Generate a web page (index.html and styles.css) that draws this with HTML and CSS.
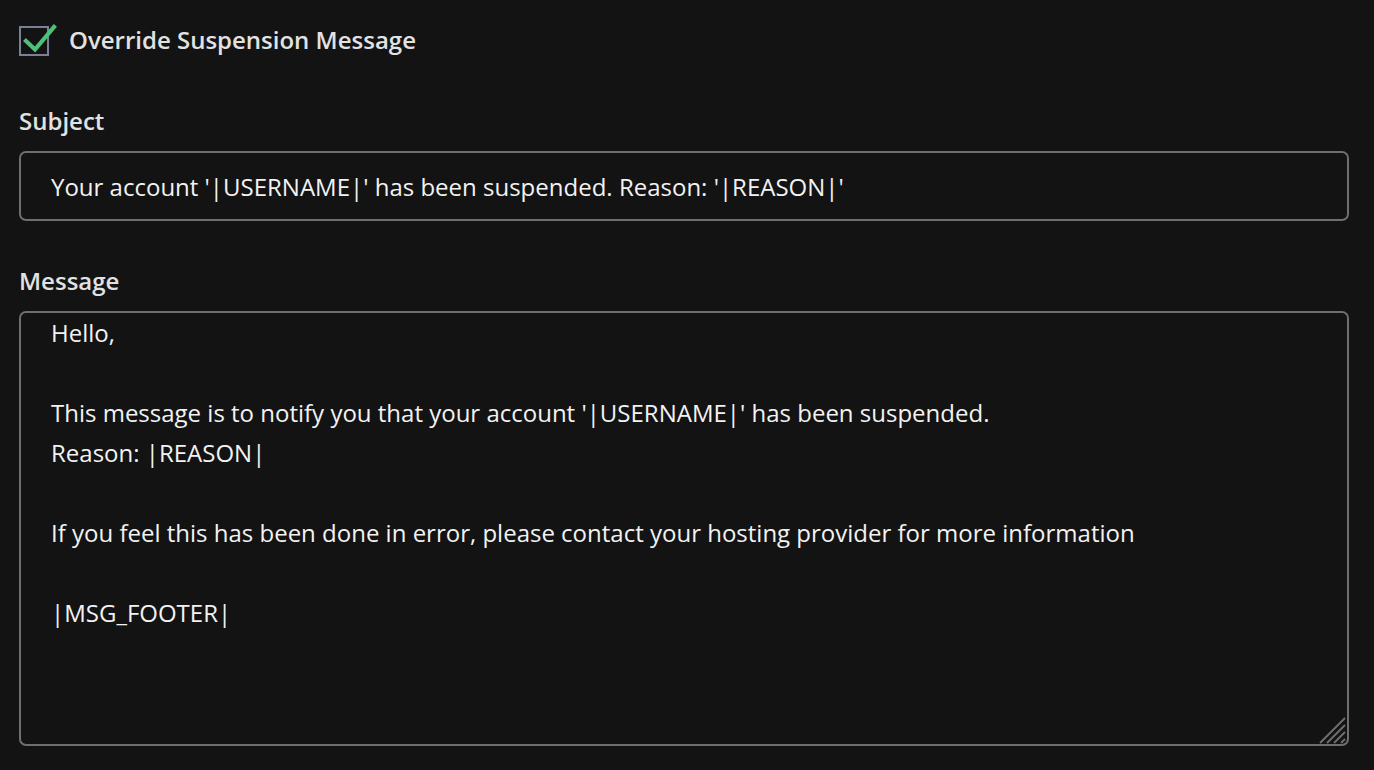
FILE: index.html
```html
<!DOCTYPE html>
<html lang="en">
<head>
<meta charset="utf-8">
<title>Override Suspension Message</title>
<link rel="stylesheet" href="styles.css">
</head>
<body>
<form class="form">
  <label class="check-row">
    <span class="checkbox">
      <svg class="check" viewBox="0 0 36 32" width="36" height="32" aria-hidden="true">
        <path d="M4 17 L13 25.5 L32 3" fill="none" stroke="#4cc276" stroke-width="4.2" stroke-linecap="square" stroke-linejoin="miter"/>
      </svg>
    </span>
    <span class="check-label">Override Suspension Message</span>
  </label>

  <div class="field field-subject">
    <label class="field-label" for="subject">Subject</label>
    <input class="input" id="subject" type="text" value="Your account '|USERNAME|' has been suspended. Reason: '|REASON|'">
  </div>

  <div class="field field-message">
    <label class="field-label" for="message">Message</label>
    <div class="textarea-wrap">
      <textarea class="textarea" id="message">Hello,

This message is to notify you that your account '|USERNAME|' has been suspended.
Reason: |REASON|

If you feel this has been done in error, please contact your hosting provider for more information

|MSG_FOOTER|</textarea>
      <svg class="resizer" viewBox="0 0 28 28" width="28" height="28" aria-hidden="true">
        <g stroke="#6e6e6e" stroke-width="2" stroke-linecap="butt">
          <line x1="1" y1="27" x2="26" y2="2"/>
          <line x1="8" y1="27" x2="26" y2="9"/>
          <line x1="15" y1="27" x2="26" y2="16"/>
          <line x1="22" y1="27" x2="26" y2="23"/>
        </g>
      </svg>
    </div>
  </div>
</form>
</body>
</html>
```

FILE: styles.css
```css
* { box-sizing: border-box; }

html, body {
  margin: 0;
  background: #131313;
}

body {
  font-family: "Open Sans", "Noto Sans", sans-serif;
  color: #e4e4e4;
}

.form {
  display: flex;
  flex-direction: column;
  width: 1330px;
  margin-left: 19px;
  padding-top: 26px;
}

.check-row {
  display: flex;
  align-items: center;
  gap: 20px;
  height: 30px;
}

.checkbox {
  position: relative;
  width: 30px;
  height: 30px;
  border: 2px solid #7a8196;
  flex: none;
}

.check {
  position: absolute;
  left: 1px;
  top: -4px;
}

.check-label {
  font-size: 24px;
  font-weight: 600;
  color: #e2e2e2;
  line-height: 30px;
  margin-top: -3px;
}

.field {
  display: flex;
  flex-direction: column;
}

.field-label {
  font-size: 24px;
  font-weight: 600;
  color: #e2e2e2;
  line-height: 30px;
  margin-bottom: 15px;
}

.field-subject .field-label { margin-top: 50px; }
.field-message .field-label { margin-top: 45px; }

.input {
  width: 100%;
  height: 70px;
  border: 2px solid #6e6e6e;
  border-radius: 7px;
  background: #131313;
  color: #f2f2f2;
  font-family: "Open Sans", "Noto Sans", sans-serif;
  font-size: 24px;
  padding: 0 0 0 30px;
  outline: none;
}

.textarea-wrap {
  position: relative;
  height: 435px;
}

.textarea {
  display: block;
  width: 100%;
  height: 100%;
  border: 2px solid #6e6e6e;
  border-radius: 7px;
  background: #131313;
  color: #f2f2f2;
  font-family: "Open Sans", "Noto Sans", sans-serif;
  font-size: 24px;
  line-height: 40px;
  padding: 0 0 0 30px;
  resize: none;
  outline: none;
}

.resizer {
  position: absolute;
  right: 2px;
  bottom: 2px;
}
```
